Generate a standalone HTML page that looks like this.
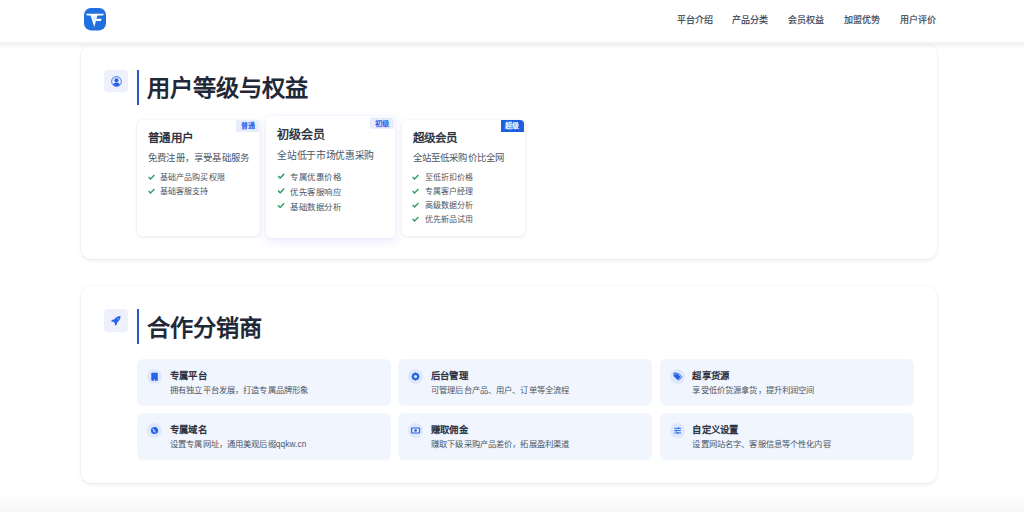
<!DOCTYPE html>
<html lang="zh-CN">
<head>
<meta charset="utf-8">
<style>
*{margin:0;padding:0;box-sizing:border-box}
html,body{width:1024px;height:512px;overflow:hidden;background:#fff}
body{position:relative;font-family:"Liberation Sans",sans-serif;color:#1f2937}
.abs{position:absolute}
.t{position:absolute;white-space:nowrap;line-height:1}
#hdr{position:absolute;left:0;top:0;width:1024px;height:42px;background:#fff;z-index:5}
#hsh{position:absolute;left:0;top:41.5px;width:1024px;height:7.5px;background:linear-gradient(to bottom,rgba(0,0,0,0.05),rgba(0,0,0,0.04) 50%,rgba(0,0,0,0.0));z-index:5}
.nav{position:absolute;top:15.6px;font-size:9px;font-weight:400;-webkit-text-stroke:0.18px #374151;color:#374151;line-height:1;white-space:nowrap}
.card{position:absolute;left:80.5px;width:856.5px;background:#fff;border-radius:10px;box-shadow:0 0 0 1px rgba(0,0,0,0.024),0 2px 4px rgba(0,0,0,0.06)}
.ibox{position:absolute;left:104px;width:23.5px;height:23px;border-radius:4px;background:#eef0fc}
.bar{position:absolute;left:137px;width:2px;height:35px;background:#2b57c9}
.h2{position:absolute;left:146px;font-size:23.2px;font-weight:700;color:#1f2937;line-height:1;white-space:nowrap}
.tier{position:absolute;width:123.3px;height:116px;background:#fff;border-radius:5px;box-shadow:0 0 0 1px rgba(0,0,0,0.018),0 1px 4px rgba(0,0,0,0.07)}
.badge{position:absolute;right:1.3px;top:0.5px;width:23px;height:11.8px;font-size:7px;font-weight:700;line-height:11.8px;text-align:center;color:#2563eb;background:#e8edfc;border-radius:0 4px 0 0}
.tier.mid{box-shadow:0 0 0 1px rgba(99,102,241,0.03),0 3px 9px rgba(99,102,241,0.12)}
.badge.sup{background:#1d5fe0;color:#fff}
.tt{position:absolute;left:11px;top:13px;letter-spacing:0.3px;font-size:11.5px;font-weight:400;-webkit-text-stroke:0.4px #1f2937;color:#1f2937;line-height:1;white-space:nowrap}
.td{position:absolute;left:11px;top:33px;letter-spacing:0.2px;font-size:9.4px;color:#4b5563;line-height:1;white-space:nowrap}
.li{position:absolute;left:10.5px;letter-spacing:0.1px;font-size:8px;color:#4b5563;line-height:1;white-space:nowrap}
.li svg{position:absolute;left:0;top:-0.2px}
.li span{position:absolute;left:12.5px;top:0}
.item{position:absolute;width:254px;height:46.5px;background:#f1f5fe;border-radius:6px}
.circ{position:absolute;left:10px;top:9.5px;width:15px;height:15px;border-radius:50%;background:#dfe7fb}
.circ svg{position:absolute;left:0;top:0}
.it{position:absolute;left:32.6px;top:11.7px;letter-spacing:0.2px;font-size:9.4px;font-weight:400;-webkit-text-stroke:0.35px #1f2937;color:#1f2937;line-height:1;white-space:nowrap}
.id{position:absolute;left:32.6px;top:27.3px;letter-spacing:0.13px;font-size:8.3px;color:#4b5563;line-height:1;white-space:nowrap}
</style>
</head>
<body>
<div id="hsh"></div>
<div id="hdr">
  <svg class="abs" style="left:84px;top:8.2px" width="22" height="22.4" viewBox="0 0 22 22.4" preserveAspectRatio="none">
    <rect x="0" y="0" width="22" height="22.4" rx="7" fill="#2170e0"/>
    <path d="M2,5.7 H19.8 L19.1,7.5 H13.3 L12.46,10.7 H17.6 L17,12.9 H11.88 L10.3,18.9 L6.6,7.5 H3 Z" fill="#fff"/>
    <path d="M8.2,8.4 H12.2 L10.6,14.8 Z" fill="#dbe8fc"/>
  </svg>
  <div class="nav" style="left:676.5px">平台介绍</div>
  <div class="nav" style="left:732.3px">产品分类</div>
  <div class="nav" style="left:788.1px">会员权益</div>
  <div class="nav" style="left:843.9px">加盟优势</div>
  <div class="nav" style="left:899.7px">用户评价</div>
</div>

<!-- Card 1 -->
<div class="card" style="top:45px;height:213.5px"></div>
<div class="ibox" style="top:69.6px;height:22.8px">
  <svg class="abs" style="left:6.6px;top:6.8px" width="11" height="11" viewBox="0 0 20 20">
    <circle cx="10" cy="10" r="8.8" fill="none" stroke="#2563eb" stroke-width="1.6"/>
    <circle cx="10" cy="7.8" r="3.7" fill="#2563eb"/>
    <path d="M3.9,15.4 C5,12.6 7.2,11.9 10,11.9 C12.8,11.9 15,12.6 16.1,15.4 C14.6,17.4 12.4,18.6 10,18.6 C7.6,18.6 5.4,17.4 3.9,15.4 Z" fill="#2563eb"/>
  </svg>
</div>
<div class="bar" style="top:70px"></div>
<div class="h2" style="top:77.3px;left:147px">用户等级与权益</div>

<div class="tier" style="left:137px;top:119.5px">
  <div class="badge">普通</div>
  <div class="tt">普通用户</div>
  <div class="td">免费注册，享受基础服务</div>
  <div class="li" style="top:54.5px"><svg width="7" height="6" viewBox="0 0 7 6"><path d="M0.6,3 L2.6,5 L6.4,1" fill="none" stroke="#38a169" stroke-width="1.5"/></svg><span>基础产品购买权限</span></div>
  <div class="li" style="top:68.5px"><svg width="7" height="6" viewBox="0 0 7 6"><path d="M0.6,3 L2.6,5 L6.4,1" fill="none" stroke="#38a169" stroke-width="1.5"/></svg><span>基础客服支持</span></div>
</div>

<div class="tier mid" style="left:268.9px;top:119.2px;transform:scale(1.05)">
  <div class="badge">初级</div>
  <div class="tt">初级会员</div>
  <div class="td">全站低于市场优惠采购</div>
  <div class="li" style="top:54.5px"><svg width="7" height="6" viewBox="0 0 7 6"><path d="M0.6,3 L2.6,5 L6.4,1" fill="none" stroke="#38a169" stroke-width="1.5"/></svg><span>专属优惠价格</span></div>
  <div class="li" style="top:68.5px"><svg width="7" height="6" viewBox="0 0 7 6"><path d="M0.6,3 L2.6,5 L6.4,1" fill="none" stroke="#38a169" stroke-width="1.5"/></svg><span>优先客服响应</span></div>
  <div class="li" style="top:82.5px"><svg width="7" height="6" viewBox="0 0 7 6"><path d="M0.6,3 L2.6,5 L6.4,1" fill="none" stroke="#38a169" stroke-width="1.5"/></svg><span>基础数据分析</span></div>
</div>

<div class="tier" style="left:401.5px;top:119.5px">
  <div class="badge sup">超级</div>
  <div class="tt">超级会员</div>
  <div class="td">全站至低采购价比全网</div>
  <div class="li" style="top:54.5px"><svg width="7" height="6" viewBox="0 0 7 6"><path d="M0.6,3 L2.6,5 L6.4,1" fill="none" stroke="#38a169" stroke-width="1.5"/></svg><span>至低折扣价格</span></div>
  <div class="li" style="top:68.5px"><svg width="7" height="6" viewBox="0 0 7 6"><path d="M0.6,3 L2.6,5 L6.4,1" fill="none" stroke="#38a169" stroke-width="1.5"/></svg><span>专属客户经理</span></div>
  <div class="li" style="top:82.5px"><svg width="7" height="6" viewBox="0 0 7 6"><path d="M0.6,3 L2.6,5 L6.4,1" fill="none" stroke="#38a169" stroke-width="1.5"/></svg><span>高级数据分析</span></div>
  <div class="li" style="top:96.5px"><svg width="7" height="6" viewBox="0 0 7 6"><path d="M0.6,3 L2.6,5 L6.4,1" fill="none" stroke="#38a169" stroke-width="1.5"/></svg><span>优先新品试用</span></div>
</div>

<!-- Card 2 -->
<div class="card" style="top:285.5px;height:197.5px"></div>
<div class="ibox" style="top:309.4px;height:22.6px">
  <svg class="abs" style="left:7.2px;top:6.6px" width="9.6" height="9.8" viewBox="0 0 10 10">
    <path d="M10,0 C7,0 4.8,1.6 3.4,3.6 L1.2,3.9 L0,5.6 L2.6,6 L4,7.4 L4.4,10 L6.1,8.8 L6.4,6.6 C8.4,5.2 10,3 10,0 Z" fill="#2563eb"/>
    <circle cx="7.3" cy="2.8" r="0.8" fill="#9fbaf5"/>
  </svg>
</div>
<div class="bar" style="top:309px"></div>
<div class="h2" style="top:317px;left:147px">合作分销商</div>

<div class="item" style="left:137.4px;top:359px">
  <div class="circ"><svg width="15" height="15" viewBox="0 0 15 15"><rect x="4.3" y="3.8" width="6.5" height="8" rx="0.8" fill="#2563eb"/><circle cx="7.55" cy="10.9" r="0.55" fill="#fff"/></svg></div>
  <div class="it">专属平台</div>
  <div class="id">拥有独立平台发展，打造专属品牌形象</div>
</div>
<div class="item" style="left:398.4px;top:359px">
  <div class="circ"><svg width="15" height="15" viewBox="0 0 15 15"><circle cx="7.5" cy="7.5" r="2.6" fill="none" stroke="#2563eb" stroke-width="2"/><g stroke="#2563eb" stroke-width="1.6"><path d="M7.5,3.6V5.1M7.5,9.9V11.4M3.6,7.5H5.1M9.9,7.5H11.4M4.75,4.75L5.8,5.8M9.2,9.2L10.25,10.25M4.75,10.25L5.8,9.2M9.2,5.8L10.25,4.75"/></g></svg></div>
  <div class="it">后台管理</div>
  <div class="id">可管理后台产品、用户、订单等全流程</div>
</div>
<div class="item" style="left:659.9px;top:359px">
  <div class="circ"><svg width="15" height="15" viewBox="0 0 15 15"><path d="M3.4,4.4 L3.5,7 L7.7,11.2 L10.8,8.1 L6.8,3.7 L4.2,3.6 Z" fill="#2563eb"/><path d="M8.2,3.9 L12,7.9 L8.6,11.4" fill="none" stroke="#2563eb" stroke-width="0.8"/><circle cx="5" cy="5.2" r="0.6" fill="#dfe7fb"/></svg></div>
  <div class="it">超享货源</div>
  <div class="id">享受低价货源拿货，提升利润空间</div>
</div>
<div class="item" style="left:137.4px;top:413.2px">
  <div class="circ"><svg width="15" height="15" viewBox="0 0 15 15"><circle cx="7.5" cy="7.5" r="3.6" fill="#2563eb"/><path d="M5.4,5.6 C6.6,5.4 7.6,6.4 7.2,7.4 C8.2,7.6 8.8,8.6 8.6,9.8 L6.6,8.8 Z" fill="#cfe0fb"/></svg></div>
  <div class="it">专属域名</div>
  <div class="id">设置专属网址，通用美观后缀qqkw.cn</div>
</div>
<div class="item" style="left:398.4px;top:413.2px">
  <div class="circ"><svg width="15" height="15" viewBox="0 0 15 15"><rect x="3.6" y="5" width="8" height="5" rx="0.4" fill="none" stroke="#2563eb" stroke-width="1.1"/><circle cx="7.6" cy="7.5" r="1.3" fill="#2563eb"/></svg></div>
  <div class="it">赚取佣金</div>
  <div class="id">赚取下级采购产品差价，拓展盈利渠道</div>
</div>
<div class="item" style="left:659.9px;top:413.2px">
  <div class="circ"><svg width="15" height="15" viewBox="0 0 15 15"><g stroke="#2563eb" stroke-width="0.9"><path d="M4.2,5.3H11M4.2,7.6H11M4.2,9.9H11"/></g><g fill="#2563eb"><rect x="8" y="4.4" width="1.2" height="1.8"/><rect x="5.6" y="6.7" width="1.2" height="1.8"/><rect x="7.2" y="9" width="1.2" height="1.8"/></g></svg></div>
  <div class="it">自定义设置</div>
  <div class="id">设置网站名字、客服信息等个性化内容</div>
</div>

<div class="abs" style="left:0;top:494px;width:1024px;height:18px;background:linear-gradient(to bottom,rgba(0,0,0,0),rgba(0,0,0,0.035))"></div>
</body>
</html>
